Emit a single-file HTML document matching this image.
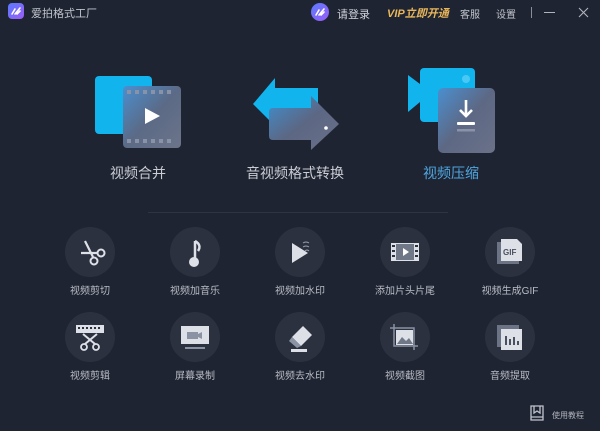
<!DOCTYPE html>
<html><head><meta charset="utf-8">
<style>
*{margin:0;padding:0;box-sizing:border-box}
body{width:600px;height:431px;background:#1f2432;font-family:"Liberation Sans","Noto Sans CJK SC",sans-serif;color:#c9ccd3;position:relative;overflow:hidden}
.a{position:absolute}
.t{font-size:11px;color:#c0c4cc;white-space:nowrap}
.big{font-size:14px;color:#c9ccd3;white-space:nowrap;transform:translateX(-50%)}
.c{width:50px;height:50px;border-radius:50%;background:#2c3140;transform:translate(-50%,-50%)}
.c svg{position:absolute;left:0;top:0}
.l{font-size:10px;color:#b8bcc5;transform:translateX(-50%);white-space:nowrap}
</style></head><body>
<!-- title bar -->
<div class="a" style="left:8px;top:3px;width:16px;height:16px;border-radius:4px;background:linear-gradient(135deg,#5a7bff,#9b5cf6)"><svg width="16" height="16"><path d="M4 11 L7 6 M7 11 L12 5 M9 11 L12 8" stroke="#fff" stroke-width="1.6" stroke-linecap="round"/></svg></div>
<div class="a t" style="left:31px;top:5px">爱拍格式工厂</div>
<div class="a" style="left:311px;top:3px;width:18px;height:18px;border-radius:50%;background:linear-gradient(135deg,#5a7bff,#9b5cf6)"><svg width="18" height="18"><path d="M5 12 L8 7 M8 12 L13 6 M10 12 L13 9" stroke="#fff" stroke-width="1.6" stroke-linecap="round"/></svg></div>
<div class="a t" style="left:337px;top:6px;font-size:11px;color:#d0d3da">请登录</div>
<div class="a t" style="left:387px;top:5px;font-size:11px;color:#e9b65a;font-weight:bold;font-style:italic">VIP立即开通</div>
<div class="a t" style="left:460px;top:6px;font-size:10px">客服</div>
<div class="a t" style="left:496px;top:6px;font-size:10px">设置</div>
<div class="a" style="left:531px;top:7px;width:1px;height:11px;background:#8a8e98"></div>
<div class="a" style="left:544px;top:12px;width:11px;height:1px;background:#b0b4bc"></div>
<svg class="a" style="left:578px;top:7px" width="11" height="11"><path d="M1 1L10 10M10 1L1 10" stroke="#b0b4bc" stroke-width="1.1"/></svg>

<!-- big icons -->
<svg class="a" style="left:90px;top:66px" width="100" height="104">
<defs><linearGradient id="g1" x1="0" y1="0" x2="1" y2="1"><stop offset="0" stop-color="#4a8fd0"/><stop offset=".5" stop-color="#5b6a86"/><stop offset="1" stop-color="#6c7489"/></linearGradient></defs>
<rect x="5" y="10" width="57" height="58" rx="4" fill="#12b4ee"/>
<rect x="33" y="20" width="58" height="62" rx="4" fill="url(#g1)"/>
<g fill="#8a92a8"><rect x="37" y="24" width="4" height="4"/><rect x="45" y="24" width="4" height="4"/><rect x="53" y="24" width="4" height="4"/><rect x="61" y="24" width="4" height="4"/><rect x="69" y="24" width="4" height="4"/><rect x="77" y="24" width="4" height="4"/><rect x="37" y="73" width="4" height="4"/><rect x="45" y="73" width="4" height="4"/><rect x="53" y="73" width="4" height="4"/><rect x="61" y="73" width="4" height="4"/><rect x="69" y="73" width="4" height="4"/><rect x="77" y="73" width="4" height="4"/></g>
<path d="M55 42 L55 58 L70 50 Z" fill="#fff"/>
</svg>
<svg class="a" style="left:245px;top:66px" width="100" height="104">
<defs><linearGradient id="g2" x1="0" y1="0" x2="1" y2="1"><stop offset="0" stop-color="#3e8fd0"/><stop offset=".5" stop-color="#5c6784"/><stop offset="1" stop-color="#6a7188"/></linearGradient></defs>
<path d="M30 12 L8 38 L30 60 L30 50 L73 50 L73 22 L30 22 Z" fill="#12b4ee"/>
<path d="M24 46 Q24 42 28 42 L66 42 L66 30 L94 58 L66 84 L66 74 L28 74 Q24 74 24 70 Z" fill="url(#g2)"/>
<circle cx="81" cy="62" r="1.8" fill="#fff"/>
</svg>
<svg class="a" style="left:400px;top:62px" width="100" height="104">
<defs><linearGradient id="g3" x1="0" y1="0" x2="1" y2="1"><stop offset="0" stop-color="#4a8fd0"/><stop offset=".5" stop-color="#5d6884"/><stop offset="1" stop-color="#6b7289"/></linearGradient></defs>
<path d="M8 13 L20 22 L20 40 L8 50 Z" fill="#12b4ee"/>
<rect x="20" y="6" width="55" height="54" rx="4" fill="#12b4ee"/>
<circle cx="66" cy="17" r="4" fill="#4ac8f4"/>
<rect x="38" y="26" width="57" height="65" rx="5" fill="url(#g3)"/>
<path d="M66 38 L66 53 M60 48 L66 54 L72 48" stroke="#fff" stroke-width="2.6" fill="none"/>
<rect x="57" y="60" width="18" height="3" rx="1" fill="#fff"/>
<rect x="57" y="67" width="18" height="2.5" fill="#8a92a8"/>
</svg>
<div class="a big" style="left:138px;top:163px">视频合并</div>
<div class="a big" style="left:295px;top:163px">音视频格式转换</div>
<div class="a big" style="left:451px;top:163px;color:#4fa6e0">视频压缩</div>

<div class="a" style="left:148px;top:212px;width:300px;height:1px;background:#2e3444"></div>

<!-- small tools -->
<div class="a c" style="left:90px;top:252px"><svg width="50" height="50"><circle cx="29" cy="34" r="3.5" stroke="#dde0e6" stroke-width="2" fill="none"/><circle cx="36" cy="26" r="3.5" stroke="#dde0e6" stroke-width="2" fill="none"/><path d="M20 14 L28 30 M16 26 L32 26" stroke="#dde0e6" stroke-width="2.2"/></svg></div>
<div class="a c" style="left:195px;top:252px"><svg width="50" height="50"><path d="M25 14 L25 33" stroke="#dde0e6" stroke-width="2.5"/><path d="M25 14 Q32 18 28 24" stroke="#dde0e6" stroke-width="2.5" fill="none"/><circle cx="24" cy="35" r="5" fill="#dde0e6"/></svg></div>
<div class="a c" style="left:300px;top:252px"><svg width="50" height="50"><path d="M17 16 L17 36 L33 26 Z" fill="#dde0e6"/><path d="M28 16 q3 -2 6 0 M28 20 q3 -2 6 0 M30 24 q2 -2 4 0" stroke="#9aa0ad" stroke-width="1" fill="none"/></svg></div>
<div class="a c" style="left:405px;top:252px"><svg width="50" height="50"><rect x="11" y="16" width="28" height="18" fill="#dde0e6"/><rect x="16" y="17" width="18" height="16" fill="#707888"/><path d="M23 21 L23 29 L29 25 Z" fill="#fff"/><g fill="#2c3140"><rect x="12" y="18" width="3" height="2"/><rect x="12" y="23" width="3" height="2"/><rect x="12" y="28" width="3" height="2"/><rect x="35" y="18" width="3" height="2"/><rect x="35" y="23" width="3" height="2"/><rect x="35" y="28" width="3" height="2"/></g></svg></div>
<div class="a c" style="left:510px;top:252px"><svg width="50" height="50"><rect x="12" y="15" width="22" height="22" fill="#6c7385"/><path d="M16 12 L32 12 L37 17 L37 34 L16 34 Z" fill="#dde0e6"/><text x="18" y="28" font-size="8" font-weight="bold" fill="#4a5060" font-family="Liberation Sans">GIF</text></svg></div>
<div class="a c" style="left:90px;top:337px"><svg width="50" height="50"><rect x="11" y="13" width="28" height="8" fill="#dde0e6"/><g fill="#2c3140"><rect x="13" y="15" width="2" height="2"/><rect x="17" y="15" width="2" height="2"/><rect x="21" y="15" width="2" height="2"/><rect x="25" y="15" width="2" height="2"/><rect x="29" y="15" width="2" height="2"/><rect x="33" y="15" width="2" height="2"/></g><path d="M18 22 L30 32 M32 22 L20 32" stroke="#dde0e6" stroke-width="2"/><circle cx="19" cy="35" r="3" stroke="#dde0e6" stroke-width="1.8" fill="none"/><circle cx="31" cy="35" r="3" stroke="#dde0e6" stroke-width="1.8" fill="none"/></svg></div>
<div class="a c" style="left:195px;top:337px"><svg width="50" height="50"><rect x="11" y="14" width="28" height="18" fill="#dde0e6"/><rect x="17" y="20" width="11" height="7" fill="#8a92a3"/><path d="M28 22 L32 20 L32 27 L28 25Z" fill="#8a92a3"/><rect x="15" y="35" width="20" height="2" fill="#8a92a3"/></svg></div>
<div class="a c" style="left:300px;top:337px"><svg width="50" height="50"><path d="M28 14 L37 23 L26 34 L17 25 Z" fill="#dde0e6"/><path d="M17 25 L26 34 L22 36 L14 29 Z" fill="#8a92a3"/><rect x="16" y="37" width="16" height="3" fill="#dde0e6"/></svg></div>
<div class="a c" style="left:405px;top:337px"><svg width="50" height="50"><path d="M14 12 L14 34 L38 34 M10 16 L34 16 L34 38" stroke="#8a92a3" stroke-width="1.5" fill="none"/><rect x="16" y="18" width="17" height="15" fill="#dde0e6"/><path d="M17 32 L22 25 L26 29 L29 26 L33 32 Z" fill="#707888"/></svg></div>
<div class="a c" style="left:510px;top:337px"><svg width="50" height="50"><rect x="12" y="13" width="22" height="22" fill="#6c7385"/><rect x="16" y="17" width="21" height="21" fill="#dde0e6"/><g fill="#4a5060"><rect x="20" y="24" width="2" height="9"/><rect x="24" y="27" width="2" height="6"/><rect x="28" y="25" width="2" height="8"/><rect x="32" y="29" width="2" height="4"/></g></svg></div>

<div class="a l" style="left:90px;top:282px">视频剪切</div>
<div class="a l" style="left:195px;top:282px">视频加音乐</div>
<div class="a l" style="left:300px;top:282px">视频加水印</div>
<div class="a l" style="left:405px;top:282px">添加片头片尾</div>
<div class="a l" style="left:510px;top:282px">视频生成GIF</div>
<div class="a l" style="left:90px;top:367px">视频剪辑</div>
<div class="a l" style="left:195px;top:367px">屏幕录制</div>
<div class="a l" style="left:300px;top:367px">视频去水印</div>
<div class="a l" style="left:405px;top:367px">视频截图</div>
<div class="a l" style="left:510px;top:367px">音频提取</div>

<svg class="a" style="left:529px;top:405px" width="16" height="18"><path d="M2 1 L14 1 L14 15 L2 15 Z M5 1 L5 8 L8 6 L11 8 L11 1 M2 12 L14 12" stroke="#c0c4cc" stroke-width="1.3" fill="none"/></svg>
<div class="a" style="left:552px;top:410px;font-size:8px;color:#b0b4bc">使用教程</div>
</body></html>
